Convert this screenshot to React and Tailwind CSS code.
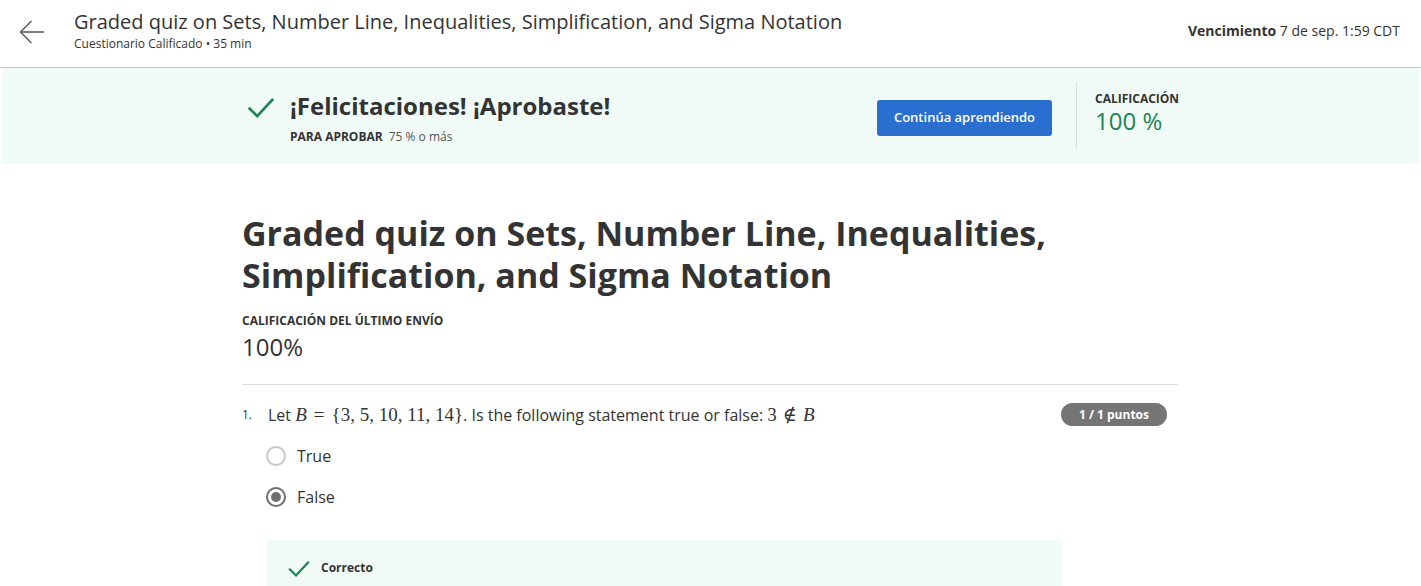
import React from "react";

function Check({ className }) {
  return (
    <svg className={className} viewBox="0 0 24 24" fill="none" stroke="currentColor" strokeWidth="2.2" strokeLinecap="square">
      <path d="M3 12.5 L9 18.5 L21 5.5" />
    </svg>
  );
}

const M = "font-['Liberation_Serif','DejaVu_Serif',serif] text-[19px]";

export default function App() {
  return (
    <div className="min-h-[586px] bg-white font-['Open_Sans','Noto_Sans',sans-serif] text-[#373a3c] overflow-hidden relative">
      {/* Header */}
      <header className="h-[68px] border-b border-[#c4c8c8] flex items-start">
        <div className="w-[74px] h-full flex items-start justify-center pt-[19px] pr-[10px]">
          <svg width="26" height="26" viewBox="0 0 26 26" fill="none" stroke="#555" strokeWidth="1.4">
            <path d="M25 13 H1.5 M12.5 2 L1.5 13 L12.5 24" />
          </svg>
        </div>
        <div className="flex-1 pt-[9px]">
          <div className="text-[20px] leading-[26px] text-[#333]">Graded quiz on Sets, Number Line, Inequalities, Simplification, and Sigma Notation</div>
          <div className="text-[12px] leading-[16px] text-[#333] mt-[1px]">Cuestionario Calificado • 35 min</div>
        </div>
        <div className="pr-[21px] pt-[21px] text-[14px] leading-[20px] text-[#333]">
          <span className="font-bold">Vencimiento</span> 7 de sep. 1:59 CDT
        </div>
      </header>

      {/* Banner */}
      <div className="mx-[2px] h-[96px] bg-[#f0faf7] flex">
        <div className="ml-[244px] flex flex-1 items-start">
          <div className="flex pt-[25px]">
            <Check className="w-[30px] h-[30px] text-[#1f8354]" />
            <div className="ml-[14px]">
              <div className="text-[24px] leading-[30px] font-bold text-[#333] mt-[-2px]">¡Felicitaciones! ¡Aprobaste!</div>
              <div className="text-[12px] leading-[16px] mt-[8px]">
                <span className="font-bold text-[#333]">PARA APROBAR</span>
                <span className="ml-[6px] text-[#555]">75 % o más</span>
              </div>
            </div>
          </div>
          <div className="ml-auto flex items-start">
            <button className="mt-[32px] w-[175px] h-[36px] rounded-[3px] bg-[#2a6fd0] text-white text-[13px] font-semibold">Continúa aprendiendo</button>
            <div className="ml-[24px] mt-[14px] w-px h-[67px] bg-[#dcdfdf]" />
            <div className="ml-[18px] mt-[23px] w-[324px]">
              <div className="text-[12px] leading-[16px] font-bold text-[#333]">CALIFICACIÓN</div>
              <div className="text-[24px] leading-[26px] mt-[1px] text-[#1f8354]">100 %</div>
            </div>
          </div>
        </div>
      </div>

      {/* Content */}
      <main className="ml-[242px] w-[936px] pt-[48px]">
        <h1 className="text-[34px] leading-[42px] font-bold text-[#333]">Graded quiz on Sets, Number Line, Inequalities, Simplification, and Sigma Notation</h1>
        <div className="mt-[17px] text-[12px] leading-[16px] font-bold text-[#333]">CALIFICACIÓN DEL ÚLTIMO ENVÍO</div>
        <div className="text-[24px] leading-[32px] text-[#333] mt-[2px]">100%</div>
        <div className="mt-[21px] h-px bg-[#dcdfdf]" />

        <div className="flex items-start mt-[17px]">
          <div className="w-[26px] text-[12px] leading-[26px] text-[#333]">1.</div>
          <div className="flex-1 text-[16px] leading-[26px] text-[#333]">
            Let <span className={`${M} italic`}>B</span>
            <span className={`${M} mx-[7px]`}>=</span>
            <span className={M}>{"{"}3, 5, 10, 11, 14{"}"}</span>. Is the following statement true or false:{" "}
            <span className={M}>3</span>
            <span className={`${M} mx-[6px]`}>∉</span>
            <span className={`${M} italic`}>B</span>
          </div>
          <div className="mr-[11px] mt-[1px] h-[23px] px-[18px] rounded-full bg-[#757575] text-white text-[12px] font-bold leading-[23px]">1 / 1 puntos</div>
        </div>

        <div className="ml-[24px] mt-[18px] flex flex-col gap-[21px]">
          <label className="flex items-center">
            <span className="w-[20px] h-[20px] rounded-full border-2 border-[#c7c7c7] bg-white" />
            <span className="ml-[11px] text-[16px] leading-[20px] text-[#333]">True</span>
          </label>
          <label className="flex items-center">
            <span className="w-[20px] h-[20px] rounded-full border-2 border-[#6e6e6e] bg-white flex items-center justify-center">
              <span className="w-[10px] h-[10px] rounded-full bg-[#6e6e6e]" />
            </span>
            <span className="ml-[11px] text-[16px] leading-[20px] text-[#333]">False</span>
          </label>
        </div>

        <div className="ml-[25px] w-[795px] mt-[33px] h-[60px] bg-[#f0faf7] pt-[17px] pl-[20px] flex items-start">
          <Check className="w-[24px] h-[24px] text-[#1f8354]" />
          <span className="ml-[10px] mt-[1px] text-[12px] leading-[20px] font-bold text-[#333]">Correcto</span>
        </div>
      </main>

      <div className="absolute left-0 bottom-0 w-[360px] h-[3px] shadow-[0_-1px_3px_rgba(0,0,0,0.12)] bg-white" />
    </div>
  );
}
